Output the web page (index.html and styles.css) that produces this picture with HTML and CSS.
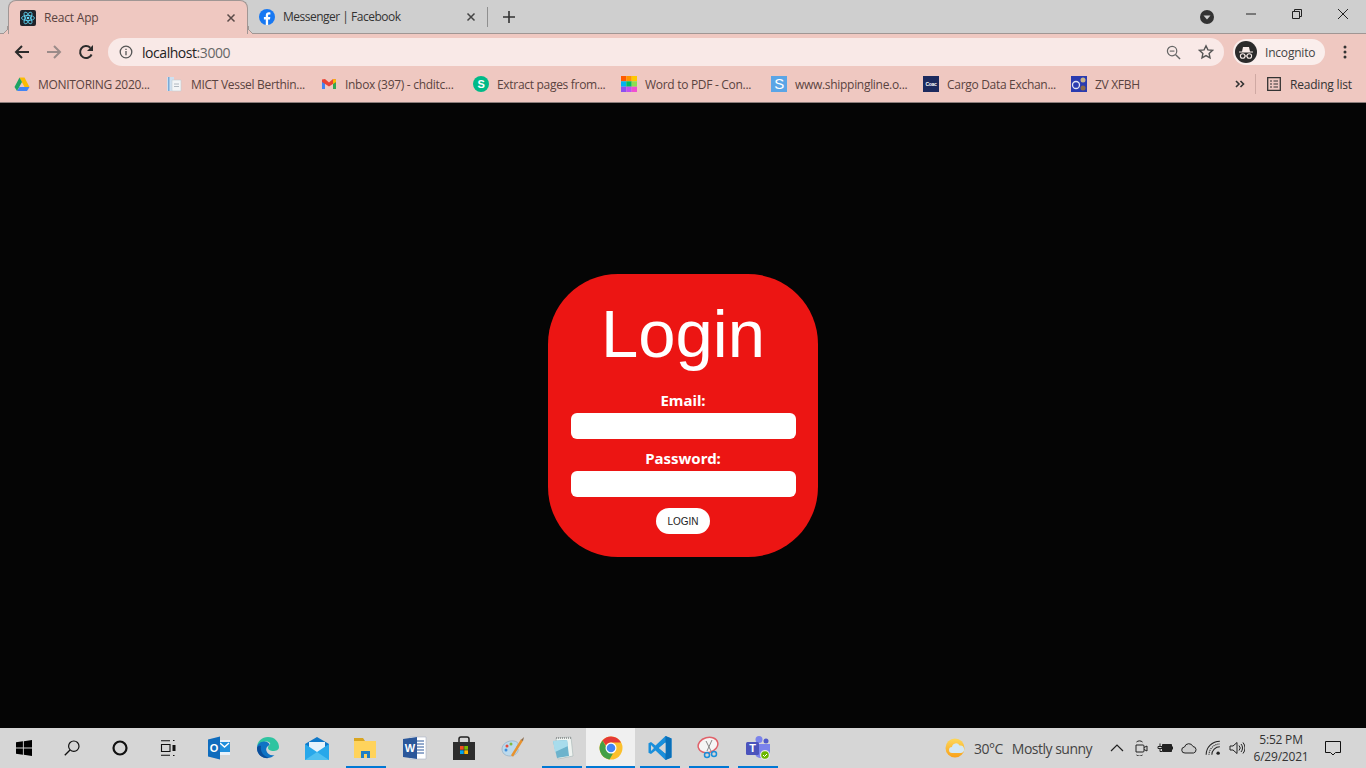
FILE: index.html
```html
<!DOCTYPE html>
<html>
<head>
<meta charset="utf-8">
<title>React App</title>
<link rel="stylesheet" href="styles.css">
</head>
<body>
<!-- Browser tabs -->
<div class="tabstrip">
  <div class="tab tab-active">
    <svg class="fav" viewBox="0 0 16 16"><rect width="16" height="16" rx="2" fill="#20232a"/><g fill="none" stroke="#61dafb" stroke-width=".8"><ellipse cx="8" cy="8" rx="6.5" ry="2.6"/><ellipse cx="8" cy="8" rx="6.5" ry="2.6" transform="rotate(60 8 8)"/><ellipse cx="8" cy="8" rx="6.5" ry="2.6" transform="rotate(120 8 8)"/></g><circle cx="8" cy="8" r="1.3" fill="#61dafb"/></svg>
    <span class="tab-title">React App</span>
    <svg class="tab-x" viewBox="0 0 10 10"><path d="M1.5 1.5l7 7M8.500 1.500l-7 7" stroke="#5a4a48" stroke-width="1.500"/></svg>
  </div>
  <div class="tab">
    <svg class="fav" viewBox="0 0 16 16"><circle cx="8" cy="8" r="8" fill="#1778f2"/><path d="M6.800 16V10.400H4.900V8H6.800V6.300C6.800 4.300 8 3.300 9.700 3.300c.8 0 1.500.1 1.700.1v2.100h-1.200c-.9 0-1.100.5-1.100 1.100V8h2.200l-.3 2.400H9.100V16z" fill="#fff"/></svg>
    <span class="tab-title">Messenger | Facebook</span>
    <svg class="tab-x" viewBox="0 0 10 10"><path d="M1.5 1.5l7 7M8.500 1.500l-7 7" stroke="#444" stroke-width="1.500"/></svg>
  </div>
  <span class="tab-sep"></span>
  <svg class="new-tab" viewBox="0 0 12 12"><path d="M6 0v12M0 6h12" stroke="#333" stroke-width="1.600"/></svg>
  <div class="caption">
    <svg class="tab-search" viewBox="0 0 14 14"><circle cx="7" cy="7" r="7" fill="#333"/><path d="M3.500 5.500h7L7 9.500z" fill="#d0d0d0"/></svg>
    <span class="cap-btn"><svg viewBox="0 0 12 12"><path d="M1 6h10" stroke="#222" stroke-width="1"/></svg></span>
    <span class="cap-btn"><svg viewBox="0 0 12 12"><path d="M1.500 3.500h7v7h-7zM3.500 3.500v-2h7v7h-2" fill="none" stroke="#222"/></svg></span>
    <span class="cap-btn"><svg viewBox="0 0 12 12"><path d="M1 1l10 10M11 1L1 11" stroke="#222" stroke-width="1"/></svg></span>
  </div>
</div>

<!-- Address bar -->
<div class="toolbar">
  <div class="nav">
    <svg viewBox="0 0 16 16"><path d="M15 8H2M8 2L2 8l6 6" fill="none" stroke="#2b2b2b" stroke-width="2"/></svg>
    <svg viewBox="0 0 16 16"><path d="M1 8h13M8 2l6 6-6 6" fill="none" stroke="#9a8b89" stroke-width="2"/></svg>
    <svg viewBox="0 0 16 16"><path d="M13.600 10.500A6 6 0 1 1 12.300 3.800" fill="none" stroke="#2b2b2b" stroke-width="2"/><path d="M15 1v6H9z" fill="#2b2b2b"/></svg>
  </div>
  <div class="omnibox">
    <svg class="omni-info" viewBox="0 0 14 14"><circle cx="7" cy="7" r="5.800" fill="none" stroke="#555" stroke-width="1.300"/><path d="M7 6v4.200M7 3.700v1.300" stroke="#555" stroke-width="1.300"/></svg>
    <span class="url">localhost<span class="url-port">:3000</span></span>
    <svg class="omni-zoom" viewBox="0 0 16 16"><circle cx="6.500" cy="6.500" r="5" fill="none" stroke="#666" stroke-width="1.300"/><path d="M10.300 10.300L15 15" stroke="#666" stroke-width="1.500"/><path d="M4 6.500h5" stroke="#666" stroke-width="1.200"/></svg>
    <svg class="omni-star" viewBox="0 0 16 16"><path d="M8 1.800l1.900 4.100 4.500.5-3.300 3 .9 4.400L8 11.600l-4 2.200.9-4.400-3.300-3 4.500-.5z" fill="none" stroke="#555" stroke-width="1.400"/></svg>
  </div>
  <div class="profile">
    <svg class="profile-ico" viewBox="0 0 22 22"><circle cx="11" cy="11" r="11" fill="#2b2b2b"/><path d="M4 10.500h14v1H4zM7 10.500l1-4.500h6l1 4.500z" fill="#f7ebe8"/><g fill="none" stroke="#f7ebe8" stroke-width="1.100"><circle cx="7.700" cy="15" r="2.300"/><circle cx="14.300" cy="15" r="2.300"/><path d="M10 15h2"/></g></svg>
    <span>Incognito</span>
  </div>
  <svg class="kebab" viewBox="0 0 4 14"><circle cx="2" cy="2" r="1.500"/><circle cx="2" cy="7" r="1.500"/><circle cx="2" cy="12" r="1.500"/></svg>
</div>

<!-- Bookmarks -->
<div class="bookmarks">
  <div class="bm">
    <svg viewBox="0 0 16 16"><path d="M5.500 1.500h5L15.500 11h-5z" fill="#fbbc04"/><path d="M5.500 1.500L.5 11 3 15l5-9z" fill="#1fa463"/><path d="M3 15h10l2.500-4H5.500z" fill="#4285f4"/></svg>
    <span>MONITORING 2020...</span>
  </div>
  <div class="bm">
    <svg viewBox="0 0 16 16"><path d="M0 1h7v14H0z" fill="#cfe0f0"/><path d="M1 1h1.500v14H1z" fill="#7aa9d6"/><path d="M5 4h9v11H5z" fill="#f3f5f7" stroke="#c5ccd3" stroke-width=".6"/><path d="M7 8h5M7 10.500h5" stroke="#b0b8c0"/></svg>
    <span>MICT Vessel Berthin...</span>
  </div>
  <div class="bm">
    <svg viewBox="0 0 16 16"><path d="M1 4v9h3V7z" fill="#4285f4"/><path d="M15 4v9h-3V7z" fill="#34a853"/><path d="M1 3.500L4 3l4 3.500L12 3l3 .5V6L8 10.500 1 6z" fill="#ea4335"/><path d="M12 3l3 .5V6l-3 2z" fill="#fbbc04"/></svg>
    <span>Inbox (397) - chditc...</span>
  </div>
  <div class="bm">
    <svg viewBox="0 0 16 16"><circle cx="8" cy="8" r="8" fill="#00ba88"/><text x="8" y="12" class="ico-letter">S</text></svg>
    <span>Extract pages from...</span>
  </div>
  <div class="bm">
    <svg viewBox="0 0 16 16"><path d="M0 0h5.300v5.300H0z" fill="#ff5a00"/><path d="M5.300 0h5.400v5.300H5.300z" fill="#ff9500"/><path d="M10.700 0H16v5.300h-5.300z" fill="#ffc800"/><path d="M0 5.300h5.300v5.400H0z" fill="#00b4f0"/><path d="M5.300 5.300h5.400v5.400H5.300z" fill="#00c060"/><path d="M10.700 5.300H16v5.400h-5.300z" fill="#8ce050"/><path d="M0 10.700h5.300V16H0z" fill="#8c50f0"/><path d="M5.300 10.700h5.400V16H5.300z" fill="#c050f0"/><path d="M10.700 10.700H16V16h-5.300z" fill="#f050d0"/></svg>
    <span>Word to PDF - Con...</span>
  </div>
  <div class="bm">
    <svg viewBox="0 0 16 16"><rect width="16" height="16" fill="#5aa5e6"/><text x="8" y="13" class="ico-letter ico-letter-big">S</text></svg>
    <span>www.shippingline.o...</span>
  </div>
  <div class="bm">
    <svg viewBox="0 0 16 16"><rect width="16" height="16" fill="#1c2a5e"/><text x="8" y="10" class="ico-letter ico-letter-small">Coac</text></svg>
    <span>Cargo Data Exchan...</span>
  </div>
  <div class="bm">
    <svg viewBox="0 0 16 16"><rect width="16" height="16" fill="#2a3bb0"/><circle cx="5" cy="9" r="3.500" fill="none" stroke="#dfe4f5" stroke-width="1.300"/><circle cx="12" cy="4" r="2.500" fill="#c9b58a"/><circle cx="12" cy="12" r="2.500" fill="#8a6a4a"/></svg>
    <span>ZV XFBH</span>
  </div>
  <svg class="bm-more" viewBox="0 0 10 8"><path d="M1 1l3 3-3 3M5.500 1l3 3-3 3" fill="none" stroke="#333" stroke-width="1.600"/></svg>
  <span class="bm-sep"></span>
  <div class="bm-reading">
    <svg viewBox="0 0 14 14"><path d="M.7.7h12.600v12.600H.7z" fill="none" stroke="#333" stroke-width="1.300"/><path d="M3 4h2M3 7h2M3 10h2M6.500 4H11M6.500 7H11M6.500 10H11" stroke="#333" stroke-width="1.200"/></svg>
    <span>Reading list</span>
  </div>
</div>

<!-- App -->
<main class="app">
  <form class="login-card">
    <h1 class="login-title">Login</h1>
    <label class="login-label" for="email">Email:</label>
    <input class="login-input" type="text" id="email">
    <label class="login-label login-label-second" for="password">Password:</label>
    <input class="login-input" type="password" id="password">
    <button class="login-button" type="button">LOGIN</button>
  </form>
</main>

<!-- Windows taskbar -->
<footer class="taskbar">
  <div class="task-system">
    <span class="task-item"><svg viewBox="0 0 16 16"><path d="M0 2.300L6.900 1.300V7.600H0zM7.800 1.200L16 0V7.600H7.800zM0 8.400H6.900V14.700L0 13.700zM7.800 8.400H16V16L7.800 14.800z" fill="#000"/></svg></span>
    <span class="task-item"><svg viewBox="0 0 16 16"><circle cx="9.800" cy="6.200" r="5.200" fill="none" stroke="#111" stroke-width="1.200"/><path d="M6 10L.8 15.300" stroke="#111" stroke-width="1.300"/></svg></span>
    <span class="task-item"><svg viewBox="0 0 16 16"><circle cx="8" cy="8" r="6.500" fill="none" stroke="#111" stroke-width="2.200"/></svg></span>
    <span class="task-item"><svg viewBox="0 0 16 16"><path d="M1 .8h9M1 15.200h9M1.500 4.500h8.500v7H1.500z" fill="none" stroke="#111" stroke-width="1.100"/><path d="M13 .5h1.500M13 15.500h1.500" stroke="#111"/><path d="M12.500 5h3v6h-3z" fill="#111"/></svg></span>
  </div>
  <div class="task-apps">
    <span class="task-item"><svg viewBox="0 0 24 24"><path d="M10 4h13v15H10z" fill="#e8f2fb"/><path d="M12 6h11v10H12z" fill="#1f8fdc"/><path d="M13 7l4.500 4L22 7" fill="none" stroke="#fff" stroke-width="1.500"/><path d="M1 3.500L13 .5v23L1 20.500z" fill="#0f6cbd"/><text x="7" y="16" class="ico-letter">O</text></svg></span>
    <span class="task-item"><svg viewBox="0 0 24 24"><path d="M1 12C1 5 6 1 12 1c7 0 11 5 11 10 0 3-3 4-6 4-2 0-5-1-5-3 0-3 3-3 2-5-1-1-3-2-6-1C4 7 1 9 1 12z" fill="#2fc4a0"/><path d="M1 12c0-4 4-7 8-6.500 3 .5 5 2 4.500 3.500-2 1-4 3-3 6 1 3 4 5 8 4-2 2-4 3-7 3C5 22 1 17 1 12z" fill="#0f73c4"/><path d="M5 10c-1 5 2 10 8 12-6 1-12-3-12-10 0-1 2-3 4-2z" fill="#0b4e9a"/></svg></span>
    <span class="task-item"><svg viewBox="0 0 24 24"><path d="M0 8L12 1l12 7v16H0z" fill="#0f78c8"/><path d="M4 6h16v9l-8 4-8-4z" fill="#e6f3fb"/><path d="M0 8l12 8 12-8v16H0z" fill="#28a8ea"/><path d="M0 24l12-8 12 8z" fill="#50c0f0"/></svg></span>
    <span class="task-item task-running"><svg viewBox="0 0 24 24"><path d="M0 2h9l2 3H0z" fill="#d9a520"/><path d="M0 5h22v17H0z" fill="#ffd35c"/><path d="M7 15h9v7H7z" fill="#1f7fc4"/><path d="M10 18h3v4h-3z" fill="#ffd35c"/></svg></span>
    <span class="task-item"><svg viewBox="0 0 24 24"><path d="M7 1h16v22H7z" fill="#fff" stroke="#a8b4c8" stroke-width=".6"/><path d="M14 5h7M14 8h7M14 11h7M14 14h7M14 17h7" stroke="#2b579a"/><path d="M0 3l14-2v22L0 21z" fill="#2b579a"/><text x="7" y="16" class="ico-letter">W</text></svg></span>
    <span class="task-item"><svg viewBox="0 0 24 24"><path d="M7 6V3a2 2 0 0 1 2-2h6a2 2 0 0 1 2 2v3" fill="none" stroke="#222" stroke-width="1.500"/><path d="M1 6h22v18H1z" fill="#2d2d2d"/><path d="M8 10h3.700v3.700H8z" fill="#f25022"/><path d="M12.300 10H16v3.700h-3.700z" fill="#7fba00"/><path d="M8 14.300h3.700V18H8z" fill="#00a4ef"/><path d="M12.300 14.300H16V18h-3.700z" fill="#ffb900"/></svg></span>
    <span class="task-item"><svg viewBox="0 0 24 24"><path d="M1 13C1 8 7 4 13 5c4 .7 5 3 3 5-1 1 0 2 1 3 1 3-3 7-8 7-5 0-8-3-8-7z" fill="#bcd9ec" stroke="#7d9db5" stroke-width=".5"/><circle cx="6" cy="10" r="1.500" fill="#e64a3c"/><circle cx="10" cy="8" r="1.500" fill="#7fba40"/><circle cx="5" cy="14" r="1.500" fill="#3f8fdc"/><path d="M11 20L21 4" stroke="#e8922e" stroke-width="2.500"/><path d="M20 4l3-3-1 4z" fill="#8a6a4a"/></svg></span>
    <span class="task-item task-running"><svg viewBox="0 0 24 24"><path d="M6 2l15-1 2 19-15 3z" fill="#eef3f0" stroke="#9aa" stroke-width=".5"/><path d="M3 5l14-1 2 16L7 22z" fill="#6db3cc"/><path d="M3 5l14-1 1 6L5 16z" fill="#a8dcec"/><path d="M6 2h15" stroke="#888" stroke-width="1.500" stroke-dasharray="1 1"/></svg></span>
    <span class="task-item task-running task-active"><svg viewBox="0 0 24 24"><circle cx="12" cy="12" r="11.500" fill="#fbc02d"/><path d="M12 .5A11.500 11.500 0 0 1 22 6.500H12a5.500 5.500 0 0 0-5 3L3.500 4.500A11.500 11.500 0 0 1 12 .5z" fill="#e53935"/><path d="M3.500 4.500L9 14a5.500 5.500 0 0 0 5 3.500l-3.500 6A11.500 11.500 0 0 1 3.500 4.500z" fill="#43a047"/><circle cx="12" cy="12" r="5.500" fill="#fff"/><circle cx="12" cy="12" r="4.300" fill="#4285f4"/></svg></span>
    <span class="task-item task-running"><svg viewBox="0 0 24 24"><path d="M17.500 0L7.500 9.500 3 6 .5 7.200v9.600L3 18l4.500-3.500 10 9.500 6-2.500v-19zM17.500 6.500v11L11 12zM3 9l3 3-3 3z" fill="#1a8fdb" fill-rule="evenodd"/><path d="M17.500 0l6 2.500v19l-6 2.500z" fill="#0a6fb8"/><path d="M17.500 6.500v11L11 12z" fill="#d6d6d6"/></svg></span>
    <span class="task-item task-running"><svg viewBox="0 0 24 24"><ellipse cx="11" cy="9" rx="10" ry="7.500" transform="rotate(-15 11 9)" fill="#f5f5f5" stroke="#e0626a" stroke-width="1.500"/><path d="M9 5l5 10M15 4l-5 11" stroke="#888"/><circle cx="10" cy="19" r="2.500" fill="none" stroke="#1a8fdb" stroke-width="1.500"/><circle cx="17" cy="18" r="2.500" fill="none" stroke="#1a8fdb" stroke-width="1.500"/></svg></span>
    <span class="task-item task-running"><svg viewBox="0 0 24 24"><circle cx="13" cy="3.500" r="3.500" fill="#7b83eb"/><circle cx="20" cy="5" r="2.500" fill="#5059c9"/><path d="M9 8h15v9a5 5 0 0 1-5 5h-5a5 5 0 0 1-5-5z" fill="#7b83eb"/><rect x="0" y="6" width="13" height="13" rx="1.500" fill="#4b53bc"/><text x="6.500" y="16" class="ico-letter">T</text><circle cx="19" cy="19" r="5" fill="#e8e8e8"/><circle cx="19" cy="19" r="3.800" fill="#6bb700"/><path d="M17 19l1.500 1.500L21 18" fill="none" stroke="#fff" stroke-width="1"/></svg></span>
  </div>
  <div class="tray">
    <div class="weather">
      <svg viewBox="0 0 20 20"><defs><linearGradient id="sun" x1="0" y1="0" x2="0" y2="1"><stop offset="0" stop-color="#fdd85a"/><stop offset="1" stop-color="#f9a11b"/></linearGradient></defs><circle cx="10" cy="10" r="9.500" fill="url(#sun)"/><path d="M7 15a3 3 0 0 1 0-6 4 4 0 0 1 7.500-1.500A3.700 3.700 0 0 1 16 15z" fill="#d4e8f4"/></svg>
      <span class="weather-temp">30°C</span>
      <span class="weather-text">Mostly sunny</span>
    </div>
    <div class="tray-icons">
      <svg viewBox="0 0 16 16"><path d="M2 11l6-6 6 6" fill="none" stroke="#222" stroke-width="1.200"/></svg>
      <svg viewBox="1 1 14 16"><path d="M3 6h7a1 1 0 0 1 1 1v5a1 1 0 0 1-1 1H3zM11 8.500l3-1.500v5l-3-1.500M3.500 3C5 1.500 8 1.500 9.500 3M3.500 16c1.500 1.500 4.500 1.500 6 0" fill="none" stroke="#222"/></svg>
      <svg viewBox="0 0 16 10"><path d="M5.500 1.500h9v7h-9z" fill="#222" stroke="#222"/><path d="M3 .5v3M1 3.500h4v2H1zM3 5.500v3h2" fill="none" stroke="#222"/><path d="M15 3.500h1v3h-1z" fill="#222"/></svg>
      <svg viewBox="0 0 16 12"><path d="M4 11a3 3 0 0 1-.5-6A4.500 4.500 0 0 1 12 4.500a3.300 3.300 0 0 1 .5 6.500z" fill="#ccc" stroke="#222"/></svg>
      <svg viewBox="0 0 14 14"><g fill="none" stroke="#222" stroke-width=".9"><path d="M1 13A12 12 0 0 1 13 1"/><path d="M3.500 13A9.500 9.500 0 0 1 13 3.500" stroke-dasharray="1 .8"/><path d="M6 13A7 7 0 0 1 13 6"/></g><circle cx="11.500" cy="11.500" r="1.500" fill="#222"/></svg>
      <svg viewBox="0 0 16 14"><path d="M1 5h3l4-3.500v11L4 9H1z" fill="none" stroke="#222"/><path d="M10 4.500a3.500 3.500 0 0 1 0 5M12 3a6 6 0 0 1 0 8M14 1.500a8.500 8.500 0 0 1 0 11" fill="none" stroke="#222"/></svg>
    </div>
    <div class="clock"><span>5:52 PM</span><span>6/29/2021</span></div>
    <svg class="notify" viewBox="0 0 16 16"><path d="M.5 1.500h15v11h-5l-2.500 2.500-2.500-2.500h-5z" fill="none" stroke="#111"/></svg>
  </div>
</footer>
</body>
</html>
```

FILE: styles.css
```css
* {
  box-sizing: border-box;
}

html, body {
  height: 100%;
}

body {
  margin: 0;
  display: flex;
  flex-direction: column;
  height: 768px;
  overflow: hidden;
  font-family: "Open Sans", "Noto Sans", sans-serif;
  font-size: 12px;
  background-color: #050505;
}

svg {
  display: block;
  flex: none;
}

/* Tabs */
.tabstrip {
  display: flex;
  align-items: center;
  height: 34px;
  padding-left: 8px;
  background-color: #cfcfcf;
  border-bottom: 1px solid #a09694;
}

.tab {
  display: flex;
  align-items: center;
  width: 239px;
  height: 33px;
  padding: 0 11px;
  color: #333;
  letter-spacing: -0.5px;
}

.tab-active {
  position: relative;
  width: 240px;
  height: 34px;
  align-self: flex-start;
  padding-left: 11px;
  background-color: #efc8c1;
  color: #5a4340;
  border: 1px solid #a09694;
  border-bottom: none;
  border-radius: 8px 8px 0 0;
  letter-spacing: -0.2px;
}

/* concave feet of the active tab */
.tab-active::before,
.tab-active::after {
  content: "";
  position: absolute;
  bottom: 0;
  width: 8px;
  height: 8px;
}

.tab-active::before {
  left: -9px;
  background: radial-gradient(circle at 0 0, transparent 7.5px, #a09694 7.5px, #a09694 8.5px, #efc8c1 8.5px);
}

.tab-active::after {
  right: -9px;
  background: radial-gradient(circle at 100% 0, transparent 7.5px, #a09694 7.5px, #a09694 8.5px, #efc8c1 8.5px);
}

.fav {
  width: 16px;
  height: 16px;
  margin-right: 8px;
}

.tab-title {
  flex: 1;
  white-space: nowrap;
}

.tab-x {
  width: 10px;
  height: 10px;
}

.tab-sep {
  width: 1px;
  height: 20px;
  background-color: #8f8f8f;
}

.new-tab {
  width: 12px;
  height: 12px;
  margin-left: 15px;
}

.caption {
  display: flex;
  align-items: center;
  margin-left: auto;
}

.tab-search {
  width: 14px;
  height: 14px;
  margin-right: 14px;
}

.cap-btn {
  display: flex;
  justify-content: center;
  width: 46px;
  margin-top: -5px;
}

.cap-btn svg {
  width: 12px;
  height: 12px;
}

/* Toolbar */
.toolbar {
  display: flex;
  align-items: center;
  height: 36px;
  background-color: #efc8c1;
}

.nav {
  display: flex;
  gap: 16px;
  width: 108px;
  padding-left: 14px;
}

.nav svg {
  width: 16px;
  height: 16px;
}

.omnibox {
  display: flex;
  align-items: center;
  width: 1116px;
  height: 28px;
  padding: 0 10px 0 11px;
  background-color: #f9e9e7;
  border-radius: 14px;
}

.omni-info {
  width: 14px;
  height: 14px;
  margin-right: 9px;
}

.url {
  flex: 1;
  font-size: 14px;
  letter-spacing: -0.45px;
  color: #222;
}

.url-port {
  color: #666;
}

.omni-zoom {
  width: 15px;
  height: 15px;
  margin-right: 17px;
}

.omni-star {
  width: 16px;
  height: 16px;
}

.profile {
  display: flex;
  align-items: center;
  gap: 8px;
  width: 92px;
  height: 26px;
  margin-left: 9px;
  padding-left: 2px;
  background-color: #faeeec;
  border-radius: 13px;
  color: #444;
  letter-spacing: -0.2px;
}

.profile-ico {
  width: 22px;
  height: 22px;
}

.kebab {
  width: 4px;
  height: 14px;
  margin-left: 18px;
  fill: #333;
}

/* Bookmarks */
.bookmarks {
  display: grid;
  grid-template-columns: 153px 154px 152px 148px 150px 152px 148px 150px 1fr 1px 110px;
  align-items: center;
  height: 33px;
  padding: 0 0 4px 14px;
  background-color: #efc8c1;
  border-bottom: 1px solid #8b7d7b;
  color: #5a4340;
}

.bm {
  display: flex;
  align-items: center;
  gap: 8px;
  letter-spacing: -0.3px;
  white-space: nowrap;
}

.bm svg {
  width: 16px;
  height: 16px;
}

.ico-letter {
  font-family: "Liberation Sans", sans-serif;
  font-size: 11px;
  font-weight: bold;
  fill: #fff;
  text-anchor: middle;
}

.ico-letter-big {
  font-size: 15px;
  font-weight: normal;
}

.ico-letter-small {
  font-size: 5px;
}

.bm-more {
  width: 10px;
  height: 8px;
  justify-self: end;
  margin-right: 10px;
}

.bm-sep {
  height: 20px;
  background-color: #cfa9a3;
}

.bm-reading {
  display: flex;
  align-items: center;
  gap: 9px;
  padding-left: 11px;
  color: #333;
  letter-spacing: -0.2px;
  white-space: nowrap;
}

.bm-reading svg {
  width: 14px;
  height: 14px;
}

/* Login */
.app {
  flex: 1;
  display: flex;
  align-items: center;
  justify-content: center;
}

.login-card {
  display: flex;
  flex-direction: column;
  align-items: center;
  width: 270px;
  padding: 20px 23px 23px;
  background-color: #ec1513;
  border-radius: 70px;
}

.login-title {
  margin: 0 0 16px;
  font-family: "Liberation Sans", sans-serif;
  font-size: 67px;
  font-weight: 400;
  line-height: 80px;
  color: #fff;
}

.login-label {
  font-family: "Noto Sans", sans-serif;
  font-size: 15px;
  font-weight: bold;
  line-height: 20px;
  color: #fff;
}

.login-label-second {
  margin-top: 9px;
}

.login-input {
  width: 225px;
  height: 26px;
  margin-top: 3px;
  border: none;
  border-radius: 6px;
  background-color: #fff;
}

.login-button {
  width: 54px;
  height: 26px;
  margin-top: 11px;
  padding: 0;
  border: none;
  border-radius: 13px;
  background-color: #fff;
  font-family: "Liberation Sans", sans-serif;
  font-size: 10px;
  color: #222;
}

/* Taskbar */
.taskbar {
  display: flex;
  height: 40px;
  background-color: #d6d6d6;
  color: #333;
}

.task-system {
  display: flex;
}

.task-system .task-item {
  width: 48px;
}

.task-system .task-item svg {
  width: 16px;
  height: 16px;
}

.task-apps {
  display: flex;
  margin-left: 2px;
}

.task-item {
  display: flex;
  align-items: center;
  justify-content: center;
  width: 49px;
  height: 40px;
}

.task-item svg {
  width: 24px;
  height: 24px;
}

.task-running {
  background: linear-gradient(#0078d4, #0078d4) center bottom / 40px 2px no-repeat;
}

.task-active {
  background: linear-gradient(#0078d4, #0078d4) center bottom / 100% 2px no-repeat, #f0f0f0;
}

.tray {
  flex: 1;
  display: flex;
  align-items: center;
  padding-left: 163px;
}

.weather {
  display: flex;
  align-items: center;
  width: 160px;
  font-size: 14px;
  letter-spacing: -0.5px;
  color: #444;
}

.weather svg {
  width: 20px;
  height: 20px;
  margin-right: 9px;
}

.weather-temp {
  margin-right: 9px;
}

.tray-icons {
  display: flex;
  align-items: center;
  gap: 8px;
  width: 144px;
  margin-left: 4px;
}

.tray-icons svg {
  width: 16px;
  height: 16px;
}

.clock {
  display: flex;
  flex-direction: column;
  align-items: center;
  width: 56px;
  line-height: 17px;
  letter-spacing: -0.2px;
}

.notify {
  width: 16px;
  height: 16px;
  margin-left: 16px;
}
```
